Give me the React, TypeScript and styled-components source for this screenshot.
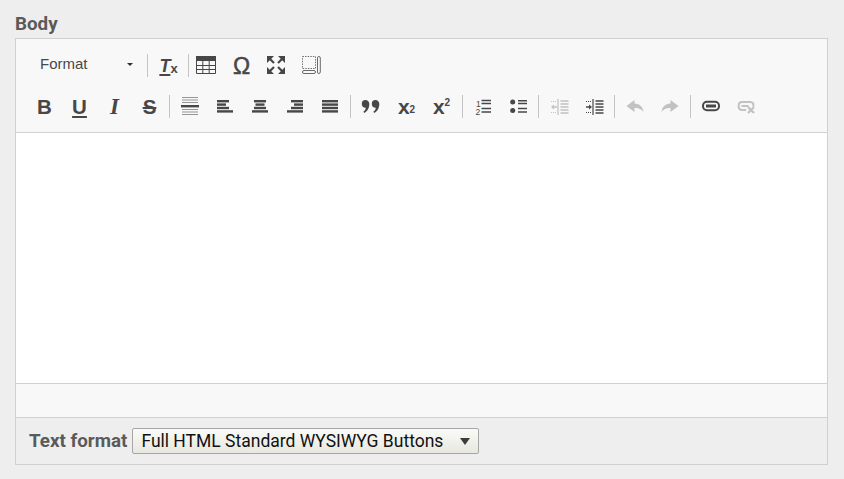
import React from 'react';
import styled, { createGlobalStyle } from 'styled-components';

const GlobalStyle = createGlobalStyle`
	html, body {
		margin: 0;
		height: 100%;
		background: #eeeeee;
		overflow: hidden;
	}
`;

const Page = styled.div`
	padding: 12px 16px 0 15px;
	font-family: Roboto, 'Liberation Sans', sans-serif;
`;

const FieldLabel = styled.div`
	height: 26px;
	line-height: 25px;
	font-size: 18.8px;
	font-weight: 700;
	color: #5a5a5a;
`;

const Frame = styled.div`
	border: 1px solid #d0d0d0;
	background: #eeeeee;
`;

const Toolbar = styled.div`
	display: flex;
	flex-direction: column;
	gap: 6px;
	padding: 9px 0 8px 11px;
	height: 94px;
	box-sizing: border-box;
	background: #f8f8f8;
	border-bottom: 1px solid #d1d1d1;
`;

const Row = styled.div`
	display: flex;
	align-items: center;
	height: 35px;
`;

const Combo = styled.div`
	display: flex;
	align-items: center;
	justify-content: space-between;
	width: 118px;
	height: 30px;
	margin-bottom: 5px;
	padding: 0 12px 0 13px;
	box-sizing: border-box;
	font-family: 'Liberation Sans', Arial, sans-serif;
	font-size: 15px;
	color: #484848;
`;

const ComboCaret = styled.span`
	width: 0;
	height: 0;
	margin-top: 3px;
	border-left: 3.5px solid transparent;
	border-right: 3.5px solid transparent;
	border-top: 3.5px solid #2f2f2f;
`;

const Sep = styled.span<{ $before?: number; $after?: number }>`
	flex: none;
	width: 1px;
	height: 23px;
	margin: 0 ${(p) => p.$after ?? 3}px 0 ${(p) => p.$before ?? 2}px;
	background: #c4c4c4;
`;

const Btn = styled.span<{ $off?: boolean }>`
	display: flex;
	flex: none;
	align-items: center;
	justify-content: center;
	width: 35px;
	height: 35px;
	color: #474747;
	opacity: ${(p) => (p.$off ? 0.3 : 1)};

	svg {
		display: block;
		margin: 0 1px 1px 0;
	}
`;

const Letter = styled.span<{
	$size?: number;
	$serif?: boolean;
	$slant?: boolean;
	$under?: boolean;
	$strike?: boolean;
	$light?: boolean;
}>`
	font-family: ${(p) => (p.$serif ? "'Liberation Serif', serif" : "'Liberation Sans', sans-serif")};
	font-size: ${(p) => p.$size ?? 20.5}px;
	line-height: 20px;
	font-weight: ${(p) => (p.$light ? 400 : 700)};
	font-style: ${(p) => (p.$slant ? 'italic' : 'normal')};
	text-decoration: ${(p) => (p.$under ? 'underline' : p.$strike ? 'line-through' : 'none')};
	text-decoration-thickness: 2px;
	text-underline-offset: 2px;
	-webkit-text-stroke: ${(p) => (p.$light ? '0.5px currentColor' : '0')};
`;

const Mini = styled.span<{ $up?: boolean; $large?: boolean }>`
	font-family: 'Liberation Sans', sans-serif;
	font-size: ${(p) => (p.$large ? '13px' : '10px')};
	line-height: 10px;
	font-weight: 700;
	align-self: ${(p) => (p.$up ? 'flex-start' : 'flex-end')};
`;

const Script = styled.span`
	display: flex;
	height: 17px;
	align-items: center;
	font-family: 'Liberation Sans', sans-serif;
	font-size: 21px;
	font-weight: 700;
	line-height: 17px;
`;

const Editable = styled.div`
	height: 250px;
	background: #ffffff;
`;

const PathBar = styled.div`
	height: 33px;
	background: #f8f8f8;
	border-top: 1px solid #d1d1d1;
	border-bottom: 1px solid #d1d1d1;
`;

const FormatRow = styled.div`
	display: flex;
	align-items: center;
	gap: 5px;
	height: 46px;
	padding-left: 13px;
`;

const FormatLabel = styled.span`
	font-size: 18.8px;
	font-weight: 700;
	color: #5a5a5a;
`;

const SelectBox = styled.div`
	display: flex;
	align-items: center;
	justify-content: space-between;
	width: 347px;
	height: 26px;
	padding: 0 8px 0 8px;
	box-sizing: border-box;
	border: 1px solid #a6a6a6;
	border-radius: 2px;
	background: linear-gradient(#fafaf8, #e8e8e0);
	font-size: 17.5px;
	color: #111111;
`;

const SelectCaret = styled.span`
	width: 0;
	height: 0;
	border-left: 5.5px solid transparent;
	border-right: 5.5px solid transparent;
	border-top: 7px solid #3c3c3c;
`;

const Icon = ({ children }: { children: React.ReactNode }) => (
	<svg width="20" height="20" viewBox="0 0 20 20" fill="currentColor">
		{children}
	</svg>
);

const Bars = ({ rows }: { rows: [number, number][] }) => (
	<Icon>
		{rows.map(([x, w], i) => (
			<rect key={i} x={x} y={4 + i * 3.4} width={w} height="2.4" />
		))}
	</Icon>
);

const Table = () => (
	<Icon>
		<rect x="0" y="1" width="20" height="5" />
		<path d="M.5 5v13.500h19V5M.5 10.500h19M.5 14.500h19M6.800 5v13.500M13.200 5v13.500" fill="none" stroke="currentColor" strokeWidth="1" />
	</Icon>
);

const Maximize = () => (
	<Icon>
		<path d="M1 1h7l-7 7zM19 1v7l-7-7zM1 19v-7l7 7zM19 19h-7l7-7z" />
		<path d="M3.500 3.500l4.500 4.500M16.500 3.500L12 8M3.500 16.500L8 12M16.500 16.500L12 12" stroke="currentColor" strokeWidth="2.200" />
	</Icon>
);

const ShowBlocks = () => (
	<Icon>
		<g opacity=".8">
			<rect x="1.500" y="1.500" width="13" height="12" fill="none" stroke="currentColor" strokeDasharray="1.400 1.200" />
			<rect x="1.500" y="15.500" width="13" height="3" rx="1.500" fill="none" stroke="currentColor" />
			<rect x="16.500" y="1.500" width="2.800" height="17" rx="1.400" fill="none" stroke="currentColor" />
		</g>
	</Icon>
);

const Rule = () => (
	<Icon>
		<g opacity=".55">
			<rect x="2" y="1" width="16" height="1" />
			<rect x="2" y="3.500" width="16" height="1" />
			<rect x="2" y="6" width="16" height="1" />
			<rect x="2" y="13" width="16" height="1" />
			<rect x="2" y="15.500" width="16" height="1" />
			<rect x="2" y="18" width="16" height="1" />
		</g>
		<rect x="1" y="9" width="18" height="2.400" />
	</Icon>
);

const Quote = () => (
	<Icon>
		<path d="M4.500 4a3.800 3.800 0 0 1 3.800 4c0 4-2 7.500-5 9l-1-1.200c1.500-1.200 2.300-2.300 2.500-4.100A3.800 3.800 0 0 1 4.500 4z" />
		<path d="M14.500 4a3.800 3.800 0 0 1 3.800 4c0 4-2 7.500-5 9l-1-1.200c1.500-1.200 2.300-2.300 2.500-4.100A3.800 3.800 0 0 1 14.500 4z" />
	</Icon>
);

const Numbered = () => (
	<Icon>
		<text x="3" y="10.500" fontSize="8.500" fontFamily="'Liberation Sans', sans-serif">1</text>
		<text x="2.500" y="19" fontSize="8.500" fontFamily="'Liberation Sans', sans-serif">2</text>
		<path d="M8.500 4.500H18M8.500 7.500H18M8.500 12.500H18M8.500 16H18" stroke="currentColor" strokeWidth="1.400" />
	</Icon>
);

const Bullets = () => (
	<Icon>
		<circle cx="4.700" cy="6" r="2.500" />
		<circle cx="4.700" cy="14.500" r="2.500" />
		<path d="M10 4.700h9M10 7.500h9M10 12.500h9M10 16h9" stroke="currentColor" strokeWidth="1.400" />
	</Icon>
);

const Indent = ({ out }: { out?: boolean }) => (
	<Icon>
		<path d="M9 3v16" stroke="currentColor" strokeWidth="1.200" />
		<path d="M11.500 5h8M11.500 8h8M11.500 11h8M11.500 14h8M11.500 17h8" stroke="currentColor" strokeWidth="1.300" />
		<path d="M2 5.500h5M2 16.500h5" stroke="currentColor" strokeDasharray="1 1" />
		{out ? <path d="M2 11l3-2.500v1.800h3v1.400H5v1.800z" /> : <path d="M8 11L5 8.500v1.800H2v1.400h3v1.800z" />}
	</Icon>
);

const Arrow = ({ flip }: { flip?: boolean }) => (
	<Icon>
		<path
			d="M9.500 4L1.500 10l8 6v-4c3.500 0 6.500.5 9 4-.5-5-4-8.500-9-8.500z"
			transform={flip ? 'matrix(-1 0 0 1 20 0)' : undefined}
		/>
	</Icon>
);

const Chain = () => (
	<Icon>
		<rect x="2" y="5.800" width="16" height="8.400" rx="4" fill="none" stroke="currentColor" strokeWidth="2" />
		<rect x="5" y="8.500" width="10" height="3" />
	</Icon>
);

const BrokenChain = () => (
	<Icon>
		<path d="M17 10.500c1.200-2.500 0-4.500-3-4.500H6c-4.500 0-4.500 8 0 8h4" fill="none" stroke="currentColor" strokeWidth="2" />
		<rect x="5.500" y="9" width="7" height="2" />
		<path d="M12 11l6 6M18 11l-6 6" stroke="currentColor" strokeWidth="2.200" />
	</Icon>
);

export default function App() {
	return (
		<Page>
			<GlobalStyle />
			<FieldLabel>Body</FieldLabel>
			<Frame>
				<Toolbar>
					<Row>
						<Combo>
							Format
							<ComboCaret />
						</Combo>
						<Sep />
						<Btn>
							<Script>
								<Letter $size={18} $slant $under>T</Letter>
								<Mini $large>x</Mini>
							</Script>
						</Btn>
						<Sep $after={0} />
						<Btn><Table /></Btn>
						<Btn><Letter $size={23} $light>Ω</Letter></Btn>
						<Btn><Maximize /></Btn>
						<Btn><ShowBlocks /></Btn>
					</Row>
					<Row>
						<Btn><Letter>B</Letter></Btn>
						<Btn><Letter $under>U</Letter></Btn>
						<Btn><Letter $size={23} $slant $serif>I</Letter></Btn>
						<Btn><Letter $strike>S</Letter></Btn>
						<Sep />
						<Btn><Rule /></Btn>
						<Btn><Bars rows={[[2, 12], [2, 9], [2, 12], [2, 16]]} /></Btn>
						<Btn><Bars rows={[[4, 12], [5.500, 9], [4, 12], [2, 16]]} /></Btn>
						<Btn><Bars rows={[[6, 12], [9, 9], [6, 12], [2, 16]]} /></Btn>
						<Btn><Bars rows={[[2, 16], [2, 16], [2, 16], [2, 16]]} /></Btn>
						<Sep />
						<Btn><Quote /></Btn>
						<Btn><Script>x<Mini>2</Mini></Script></Btn>
						<Btn><Script>x<Mini $up>2</Mini></Script></Btn>
						<Sep $before={3} />
						<Btn><Numbered /></Btn>
						<Btn><Bullets /></Btn>
						<Sep />
						<Btn $off><Indent out /></Btn>
						<Btn><Indent /></Btn>
						<Sep />
						<Btn $off><Arrow /></Btn>
						<Btn $off><Arrow flip /></Btn>
						<Sep />
						<Btn><Chain /></Btn>
						<Btn $off><BrokenChain /></Btn>
					</Row>
				</Toolbar>
				<Editable />
				<PathBar />
				<FormatRow>
					<FormatLabel>Text format</FormatLabel>
					<SelectBox>
						Full HTML Standard WYSIWYG Buttons
						<SelectCaret />
					</SelectBox>
				</FormatRow>
			</Frame>
		</Page>
	);
}
